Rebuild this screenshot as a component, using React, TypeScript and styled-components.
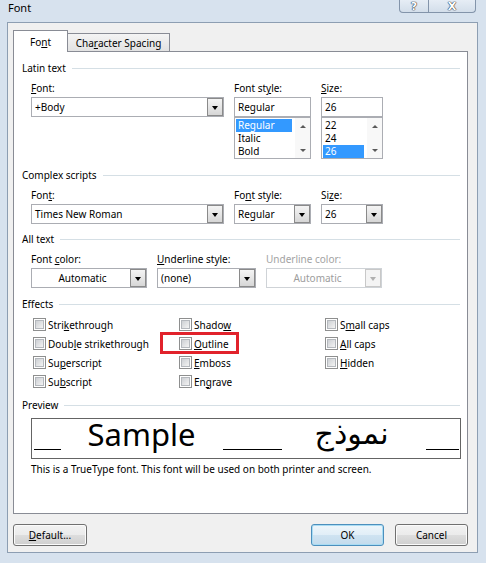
import React from "react";
import styled, { createGlobalStyle, css } from "styled-components";

const GlobalStyle = createGlobalStyle`
  html, body {
    margin: 0;
    padding: 0;
  }
  body {
    font-family: "Noto Sans", "Open Sans", "DejaVu Sans", sans-serif;
    font-size: 10px;
    color: #000;
    background: #d7e2ee;
  }
`;

const Window = styled.div`
  width: 486px;
  height: 563px;
  display: flex;
  flex-direction: column;
  background: #d7e2ee;
  overflow: hidden;
`;

const TitleBar = styled.div`
  height: 22px;
  flex: none;
  display: flex;
  align-items: flex-start;
  padding: 0 10px 0 8px;
`;

const Title = styled.div`
  font-size: 11px;
  line-height: 12px;
  margin-top: 2px;
`;

const CaptionButtons = styled.div`
  margin-left: auto;
  display: flex;
  height: 13px;
  box-sizing: border-box;
  border: 1px solid #8394aa;
  border-top: none;
  border-radius: 0 0 4px 4px;
  overflow: hidden;
  background: linear-gradient(#e6edf5, #d3deea);
`;

const CaptionButton = styled.div<{ $w: number }>`
  width: ${(p) => p.$w}px;
  display: flex;
  justify-content: center;
  align-items: center;
  & + & {
    border-left: 1px solid #8394aa;
  }
`;

const Glyph = styled.span`
  font-family: "DejaVu Sans", sans-serif;
  font-weight: bold;
  font-size: 11px;
  line-height: 11px;
  color: #fff;
  text-shadow: 0 0 1px #2b3440, 0 0 1px #2b3440, 0 0 1px #2b3440;
`;

const Client = styled.div`
  flex: 1;
  margin: 0 8px 10px 7px;
  border: 1px solid #8d9eb2;
  background: #f0f0f0;
  padding: 7px 9px 0 5px;
  display: flex;
  flex-direction: column;
`;

const TabStrip = styled.div`
  display: flex;
  align-items: flex-end;
  height: 21px;
  position: relative;
  z-index: 1;
`;

const Tab = styled.div<{ $active?: boolean; $w: number }>`
  box-sizing: border-box;
  width: ${(p) => p.$w}px;
  border: 1px solid #898c95;
  border-bottom: none;
  display: flex;
  align-items: center;
  justify-content: center;
  ${(p) =>
    p.$active
      ? css`
          height: 22px;
          margin-bottom: -1px;
          background: #fff;
        `
      : css`
          height: 18px;
          border-left: none;
          background: linear-gradient(#f4f4f4, #e2e2e2);
        `}
`;

const Panel = styled.div`
  height: 463px;
  box-sizing: border-box;
  border: 1px solid #898c95;
  background: #fff;
  padding: 8px 7px 0 8px;
`;

const Heading = styled.div<{ $gap: number }>`
  display: flex;
  align-items: center;
  height: 16px;
  line-height: 16px;
  margin-top: ${(p) => p.$gap}px;
  &::after {
    content: "";
    flex: 1;
    height: 1px;
    margin-left: 6px;
    background: #d5dfe5;
  }
`;

const Body = styled.div`
  padding-left: 9px;
`;

const FieldsRow = styled.div<{ $cols: string }>`
  display: grid;
  grid-template-columns: ${(p) => p.$cols};
  column-gap: 10px;
  margin-top: 4px;
`;

const Field = styled.div`
  display: flex;
  flex-direction: column;
`;

const FieldLabel = styled.div<{ $disabled?: boolean }>`
  height: 17px;
  line-height: 16px;
  color: ${(p) => (p.$disabled ? "#a3a3a3" : "#000")};
`;

const ComboBox = styled.div<{ $disabled?: boolean }>`
  height: 20px;
  box-sizing: border-box;
  border: 1px solid ${(p) => (p.$disabled ? "#cfd3d7" : "#abadb3")};
  background: #fff;
  display: flex;
  align-items: stretch;
`;

const ComboValue = styled.div<{ $center?: boolean; $disabled?: boolean }>`
  flex: 1;
  display: flex;
  align-items: center;
  padding-left: 3px;
  justify-content: ${(p) => (p.$center ? "center" : "flex-start")};
  color: ${(p) => (p.$disabled ? "#9d9d9d" : "#000")};
  white-space: nowrap;
`;

const DropButton = styled.div<{ $disabled?: boolean }>`
  width: 16px;
  box-sizing: border-box;
  border: 1px solid ${(p) => (p.$disabled ? "#c8c8c8" : "#8a8a8a")};
  background: ${(p) =>
    p.$disabled
      ? "#f4f4f4"
      : "linear-gradient(#f4f4f4, #e6e6e6 50%, #d6d6d6)"};
  display: flex;
  align-items: center;
  justify-content: center;
  &::after {
    content: "";
    margin-top: 1px;
    border-top: 4px solid ${(p) => (p.$disabled ? "#b0b0b0" : "#000")};
    border-left: 3.5px solid transparent;
    border-right: 3.5px solid transparent;
  }
`;

const ListBox = styled.div`
  height: 42px;
  box-sizing: border-box;
  border: 1px solid #abadb3;
  background: #fff;
  display: flex;
`;

const ListItems = styled.div`
  flex: 1;
  padding: 1px 3px 0 1px;
`;

const ListItem = styled.div<{ $selected?: boolean }>`
  height: 13px;
  line-height: 13px;
  padding-left: 2px;
  background: ${(p) => (p.$selected ? "#3399ff" : "transparent")};
  color: ${(p) => (p.$selected ? "#fff" : "#000")};
`;

const ScrollBar = styled.div`
  width: 15px;
  background: #f8f8f8;
  display: flex;
  flex-direction: column;
  justify-content: space-between;
  align-items: center;
  padding: 7px 0 6px;
`;

const ScrollArrow = styled.span<{ $up?: boolean }>`
  border-left: 3px solid transparent;
  border-right: 3px solid transparent;
  ${(p) =>
    p.$up
      ? css`
          border-bottom: 3px solid #5a5a5a;
        `
      : css`
          border-top: 3px solid #5a5a5a;
        `}
`;

const EffectsGrid = styled.div`
  display: grid;
  grid-template-columns: repeat(3, 146px);
  grid-template-rows: repeat(4, 19px);
  grid-auto-flow: column;
  margin: 3px 0 1px;
  padding-left: 2px;
`;

const CheckItem = styled.div`
  position: relative;
  display: flex;
  align-items: center;
  gap: 2px;
`;

const CheckBox = styled.span`
  width: 13px;
  height: 13px;
  box-sizing: border-box;
  border: 1px solid #8e8f8f;
  padding: 1px;
  background: #fff;
  display: flex;
  &::after {
    content: "";
    flex: 1;
    box-sizing: border-box;
    border: 1px solid #b4b8bd;
    background: linear-gradient(135deg, #cdd0d4, #f3f3f3);
  }
`;

const Highlight = styled.span`
  position: absolute;
  left: -19px;
  top: -2px;
  width: 79px;
  height: 22px;
  box-sizing: border-box;
  border: 3px solid #e1222b;
  pointer-events: none;
`;

const PreviewBox = styled.div`
  margin-top: 5px;
  width: 430px;
  height: 41px;
  box-sizing: border-box;
  border: 1px solid #646464;
  background: #fff;
  display: flex;
  align-items: flex-end;
  padding: 0 1px 8px 1px;
`;

const Rule = styled.span<{ $w: number; $gap: number }>`
  width: ${(p) => p.$w}px;
  margin-left: ${(p) => p.$gap}px;
  border-bottom: 1px solid #000;
`;

const SampleText = styled.span<{ $gap: number }>`
  margin-left: ${(p) => p.$gap}px;
  font-size: 31px;
  line-height: 31px;
`;

const ArabicText = styled.span<{ $gap: number }>`
  margin-left: ${(p) => p.$gap}px;
  font-family: "DejaVu Sans", sans-serif;
  font-size: 30px;
  line-height: 32px;
`;

const Caption = styled.div`
  margin-top: 2px;
  line-height: 16px;
`;

const ButtonRow = styled.div`
  display: flex;
  margin-top: 10px;
  gap: 11px;
`;

const Button = styled.div<{ $w: number; $primary?: boolean; $push?: boolean }>`
  width: ${(p) => p.$w}px;
  height: 22px;
  box-sizing: border-box;
  border-radius: 3px;
  display: flex;
  align-items: center;
  justify-content: center;
  margin-left: ${(p) => (p.$push ? "auto" : "0")};
  border: 1px solid ${(p) => (p.$primary ? "#4c8fbd" : "#707070")};
  background: ${(p) =>
    p.$primary
      ? "linear-gradient(#eef6fb, #e1eef7 50%, #cfe3f1 51%, #c3dbec)"
      : "linear-gradient(#f2f2f2, #ebebeb 50%, #dddddd 51%, #cfcfcf)"};
  box-shadow: inset 0 0 0 1px ${(p) => (p.$primary ? "#a9dcf3" : "#fbfbfb")};
`;

const Key = styled.span`
  text-decoration: underline;
  text-underline-offset: 1px;
`;

const mn = (text: string, i: number) =>
  i < 0 ? (
    text
  ) : (
    <>
      {text.slice(0, i)}
      <Key>{text[i]}</Key>
      {text.slice(i + 1)}
    </>
  );

const Combo = ({
  value,
  center,
  disabled,
}: {
  value: string;
  center?: boolean;
  disabled?: boolean;
}) => (
  <ComboBox $disabled={disabled}>
    <ComboValue $center={center} $disabled={disabled}>
      {value}
    </ComboValue>
    <DropButton $disabled={disabled} />
  </ComboBox>
);

const TextBox = ({ value }: { value: string }) => (
  <ComboBox>
    <ComboValue>{value}</ComboValue>
  </ComboBox>
);

const List = ({ items, selected }: { items: string[]; selected: number }) => (
  <ListBox>
    <ListItems>
      {items.map((item, i) => (
        <ListItem key={item} $selected={i === selected}>
          {item}
        </ListItem>
      ))}
    </ListItems>
    <ScrollBar>
      <ScrollArrow $up />
      <ScrollArrow />
    </ScrollBar>
  </ListBox>
);

const effects: [string, number][] = [
  ["Strikethrough", 4],
  ["Double strikethrough", 4],
  ["Superscript", 2],
  ["Subscript", 2],
  ["Shadow", 5],
  ["Outline", 0],
  ["Emboss", 0],
  ["Engrave", 2],
  ["Small caps", 1],
  ["All caps", 0],
  ["Hidden", 0],
];

const App = () => {
  return (
    <>
      <GlobalStyle />
      <Window>
        <TitleBar>
          <Title>Font</Title>
          <CaptionButtons>
            <CaptionButton $w={28}>
              <Glyph>?</Glyph>
            </CaptionButton>
            <CaptionButton $w={46}>
              <Glyph>X</Glyph>
            </CaptionButton>
          </CaptionButtons>
        </TitleBar>
        <Client>
          <TabStrip>
            <Tab $active $w={55}>
              {mn("Font", 2)}
            </Tab>
            <Tab $w={102}>{mn("Character Spacing", 3)}</Tab>
          </TabStrip>
          <Panel>
            <Heading $gap={0}>Latin text</Heading>
            <Body>
              <FieldsRow $cols="193px 77px 62px">
                <Field>
                  <FieldLabel>{mn("Font:", 0)}</FieldLabel>
                  <Combo value="+Body" />
                </Field>
                <Field>
                  <FieldLabel>{mn("Font style:", 7)}</FieldLabel>
                  <TextBox value="Regular" />
                  <List items={["Regular", "Italic", "Bold"]} selected={0} />
                </Field>
                <Field>
                  <FieldLabel>{mn("Size:", 0)}</FieldLabel>
                  <TextBox value="26" />
                  <List items={["22", "24", "26"]} selected={2} />
                </Field>
              </FieldsRow>
            </Body>

            <Heading $gap={8}>Complex scripts</Heading>
            <Body>
              <FieldsRow $cols="193px 77px 62px">
                <Field>
                  <FieldLabel>{mn("Font:", 3)}</FieldLabel>
                  <Combo value="Times New Roman" />
                </Field>
                <Field>
                  <FieldLabel>{mn("Font style:", 2)}</FieldLabel>
                  <Combo value="Regular" />
                </Field>
                <Field>
                  <FieldLabel>{mn("Size:", 2)}</FieldLabel>
                  <Combo value="26" />
                </Field>
              </FieldsRow>
            </Body>

            <Heading $gap={7}>All text</Heading>
            <Body>
              <FieldsRow $cols="116px 99px 116px">
                <Field>
                  <FieldLabel>{mn("Font color:", 5)}</FieldLabel>
                  <Combo value="Automatic" center />
                </Field>
                <Field>
                  <FieldLabel>{mn("Underline style:", 0)}</FieldLabel>
                  <Combo value="(none)" />
                </Field>
                <Field>
                  <FieldLabel $disabled>Underline color:</FieldLabel>
                  <Combo value="Automatic" center disabled />
                </Field>
              </FieldsRow>
            </Body>

            <Heading $gap={8}>Effects</Heading>
            <Body>
              <EffectsGrid>
                {effects.map(([label, key]) => (
                  <CheckItem key={label}>
                    <CheckBox />
                    <span>{mn(label, key)}</span>
                    {label === "Outline" && <Highlight />}
                  </CheckItem>
                ))}
              </EffectsGrid>
            </Body>

            <Heading $gap={6}>Preview</Heading>
            <Body>
              <PreviewBox>
                <Rule $w={27} $gap={1} />
                <SampleText $gap={27}>Sample</SampleText>
                <Rule $w={60} $gap={27} />
                <ArabicText $gap={33}>نموذج</ArabicText>
                <Rule $w={34} $gap={37} />
              </PreviewBox>
              <Caption>
                This is a TrueType font. This font will be used on both printer
                and screen.
              </Caption>
            </Body>
          </Panel>
          <ButtonRow>
            <Button $w={74}>{mn("Default...", 0)}</Button>
            <Button $w={73} $primary $push>
              OK
            </Button>
            <Button $w={73}>Cancel</Button>
          </ButtonRow>
        </Client>
      </Window>
    </>
  );
};

export default App;
